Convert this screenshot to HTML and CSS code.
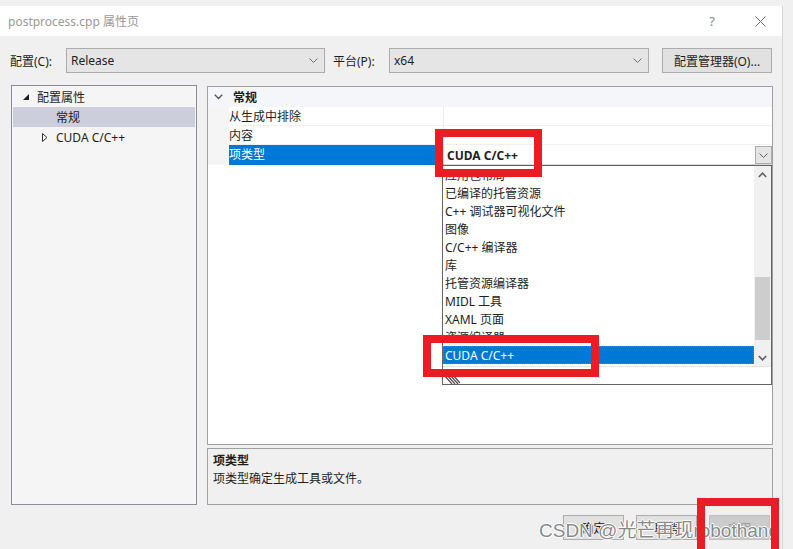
FILE: index.html
```html
<!DOCTYPE html>
<html lang="zh-CN">
<head>
    <meta charset="UTF-8">
    <title>postprocess.cpp 属性页</title>
    <link rel="stylesheet" href="styles.css">
</head>
<body>
    <div class="window">
        <div class="titlebar">
            <span class="title">postprocess.cpp 属性页</span>
            <span class="help">?</span>
            <svg class="close" width="11" height="11" viewBox="0 0 11 11"><path d="M0.5 0.5 L10.5 10.5 M10.5 0.5 L0.5 10.5" stroke="#6f6f6f" stroke-width="1" fill="none"/></svg>
        </div>

        <div class="config-row">
            <span class="cfg-label">配置(C):</span>
            <div class="select sel-config">
                <span>Release</span>
                <svg width="9" height="5" viewBox="0 0 9 5"><path d="M0.5 0.5 L4.5 4.5 L8.5 0.5" stroke="#707070" fill="none"/></svg>
            </div>
            <span class="cfg-label plat">平台(P):</span>
            <div class="select sel-platform">
                <span>x64</span>
                <svg width="9" height="5" viewBox="0 0 9 5"><path d="M0.5 0.5 L4.5 4.5 L8.5 0.5" stroke="#707070" fill="none"/></svg>
            </div>
            <button class="btn btn-manager">配置管理器(O)...</button>
        </div>

        <div class="main">
            <div class="tree">
                <div class="tree-row level-0">
                    <span class="twisty"><svg width="6" height="6" viewBox="0 0 6 6"><polygon points="6,0 6,6 0,6" fill="#1e1e1e"/></svg></span>
                    <span>配置属性</span>
                </div>
                <div class="tree-row level-1 selected">
                    <span class="twisty"></span>
                    <span>常规</span>
                </div>
                <div class="tree-row level-1">
                    <span class="twisty"><svg width="6" height="9" viewBox="0 0 6 9"><polygon points="0.5,0.5 5,4.5 0.5,8.5" fill="none" stroke="#333"/></svg></span>
                    <span>CUDA C/C++</span>
                </div>
            </div>

            <div class="right">
                <div class="grid">
                    <div class="cat-row">
                        <span class="cat-arrow"><svg width="9" height="6" viewBox="0 0 9 6"><path d="M0.8 0.8 L4.5 4.5 L8.2 0.8" stroke="#555" stroke-width="1.4" fill="none"/></svg></span>
                        <b>常规</b>
                    </div>
                    <div class="prop-row">
                        <div class="prop-margin"></div>
                        <div class="prop-name">从生成中排除</div>
                        <div class="prop-value"></div>
                    </div>
                    <div class="prop-row">
                        <div class="prop-margin"></div>
                        <div class="prop-name">内容</div>
                        <div class="prop-value"></div>
                    </div>
                    <div class="prop-row active">
                        <div class="prop-margin"></div>
                        <div class="prop-name">项类型</div>
                        <div class="prop-value combo">
                            <b>CUDA C/C++</b>
                            <span class="combo-btn"><svg width="9" height="5" viewBox="0 0 9 5"><path d="M0.5 0.5 L4.5 4.5 L8.5 0.5" stroke="#606060" fill="none"/></svg></span>
                        </div>
                    </div>
                </div>
                <div class="desc">
                    <div class="desc-title">项类型</div>
                    <div>项类型确定生成工具或文件。</div>
                </div>
            </div>
        </div>

        <div class="footer">
            <button class="btn btn-foot">确定</button>
            <button class="btn btn-foot">取消</button>
            <button class="btn btn-foot disabled">应用</button>
        </div>
    </div>

    <!-- open dropdown of 项类型 -->
    <div class="dropdown">
        <div class="dd-body">
            <div class="dd-list">
                <div class="dd-item">应用包布局</div>
                <div class="dd-item">已编译的托管资源</div>
                <div class="dd-item">C++ 调试器可视化文件</div>
                <div class="dd-item">图像</div>
                <div class="dd-item">C/C++ 编译器</div>
                <div class="dd-item">库</div>
                <div class="dd-item">托管资源编译器</div>
                <div class="dd-item">MIDL 工具</div>
                <div class="dd-item">XAML 页面</div>
                <div class="dd-item">资源编译器</div>
                <div class="dd-item selected">CUDA C/C++</div>
            </div>
            <div class="dd-scroll">
                <div class="sb-btn"><svg width="9" height="6" viewBox="0 0 9 6"><path d="M0.8 5 L4.5 1.2 L8.2 5" stroke="#606060" stroke-width="1.6" fill="none"/></svg></div>
                <div class="sb-track"><div class="sb-thumb"></div></div>
                <div class="sb-btn"><svg width="9" height="6" viewBox="0 0 9 6"><path d="M0.8 1 L4.5 4.8 L8.2 1" stroke="#606060" stroke-width="1.6" fill="none"/></svg></div>
            </div>
        </div>
        <div class="dd-grip">
            <svg width="17" height="9" viewBox="0 0 17 9"><path d="M1 0 L9 9 M4 0 L12 9 M7 0 L15 9 M10 0 L17 8" stroke="#4a4a4a" stroke-width="1.2" fill="none"/></svg>
        </div>
    </div>

    <div class="watermark">CSDN @光芒再现robothang</div>

    <div class="mark mark-combo"></div>
    <div class="mark mark-item"></div>
    <div class="mark mark-apply"></div>
</body>
</html>
```

FILE: styles.css
```css
body {
    margin: 0;
    width: 793px;
    height: 549px;
    overflow: hidden;
    position: relative;
    background: #f0f0f0;
    font-family: "Noto Sans", "Noto Sans CJK SC", sans-serif;
    font-size: 12px;
    color: #1e1e1e;
}

.window {
    margin-top: 6px;
    width: 783px;
    height: 543px;
    box-sizing: border-box;
    border-right: 1px solid #d6d6d6;
    background: #f0f0f0;
}

.titlebar {
    height: 30px;
    background: #fff;
    display: flex;
    align-items: center;
    padding: 0 16px 0 8px;
}

.title {
    flex: 1;
    color: #999;
}

.help {
    color: #8a8a8a;
    font-size: 13px;
    margin-right: 40px;
}

.config-row {
    display: flex;
    align-items: center;
    height: 25px;
    margin-top: 12px;
    padding-left: 10px;
}

.cfg-label {
    width: 56px;
}

.cfg-label.plat {
    margin-left: 8px;
}

.select {
    height: 25px;
    box-sizing: border-box;
    background: #e5e5e5;
    border: 1px solid #acacac;
    display: flex;
    align-items: center;
    justify-content: space-between;
    padding: 0 6px 0 4px;
}

.sel-config {
    width: 259px;
}

.sel-platform {
    width: 260px;
}

.btn {
    font: inherit;
    color: #1e1e1e;
    background: #e1e1e1;
    border: 1px solid #adadad;
    padding: 0;
    box-sizing: border-box;
}

.btn-manager {
    margin-left: 13px;
    width: 110px;
    height: 25px;
}

.main {
    display: flex;
    gap: 10px;
    height: 420px;
    margin-top: 12px;
    padding-left: 11px;
}

.tree {
    width: 186px;
    box-sizing: border-box;
    border: 1px solid #8b8d96;
    background: #f5f5f5;
    padding: 1px;
}

.tree-row {
    height: 20px;
    display: flex;
    align-items: center;
}

.tree-row.level-0 {
    padding-left: 10px;
}

.tree-row.level-1 {
    padding-left: 29px;
}

.tree-row.selected {
    background: #cccedb;
}

.twisty {
    width: 14px;
    display: flex;
    align-items: center;
}

.right {
    width: 566px;
    display: flex;
    flex-direction: column;
    gap: 3px;
}

.grid {
    height: 359px;
    margin-top: 1px;
    box-sizing: border-box;
    border: 1px solid #a0a0a0;
    background: #fff;
}

.cat-row {
    height: 20px;
    display: flex;
    align-items: center;
    background: #f4f6f9;
    padding-left: 6px;
}

.cat-arrow {
    width: 19px;
    display: flex;
    align-items: center;
}

.prop-row {
    display: grid;
    grid-template-columns: 21px 215px 1fr;
    height: 19px;
}

.prop-margin {
    background: #f5f5f5;
}

.prop-name {
    box-sizing: border-box;
    padding-top: 2px;
    line-height: 16px;
    border-bottom: 1px solid #f0f0f0;
    border-right: 1px solid #ececec;
}

.prop-value {
    border-bottom: 1px solid #f0f0f0;
}

.prop-row.active .prop-name {
    background: #0078d7;
    color: #fff;
    border-bottom-color: #0078d7;
}

.combo {
    display: flex;
    align-items: center;
    justify-content: space-between;
    padding-left: 3px;
    padding-top: 1px;
    border-bottom: 1px solid #d8d8d8;
}

.combo-btn {
    width: 17px;
    height: 18px;
    box-sizing: border-box;
    background: #e5e5e5;
    border: 1px solid #acacac;
    display: flex;
    align-items: center;
    justify-content: center;
}

.desc {
    height: 57px;
    box-sizing: border-box;
    border: 1px solid #a0a0a0;
    background: #f0f0f0;
    padding: 3px 5px;
    line-height: 18px;
}

.desc-title {
    font-weight: bold;
}

.footer {
    display: flex;
    justify-content: flex-end;
    gap: 12px;
    margin-top: 10px;
    padding-right: 12px;
}

.btn-foot {
    width: 61px;
    height: 25px;
}

.btn-foot.disabled {
    background: #cccccc;
    border-color: #bfbfbf;
    color: #a0a0a0;
}

.dropdown {
    position: absolute;
    left: 442px;
    top: 165px;
    width: 330px;
    height: 220px;
    box-sizing: border-box;
    border: 1px solid #646464;
    background: #fff;
}

.dd-body {
    display: flex;
    height: 200px;
}

.dd-list {
    flex: 1;
    overflow: hidden;
    position: relative;
}

.dd-list::before {
    content: "";
    position: absolute;
    left: 0;
    right: 0;
    top: 0;
    height: 5px;
    background: #fff;
}

.dd-item {
    height: 18px;
    box-sizing: border-box;
    padding: 2px 0 0 2px;
    line-height: 16px;
    white-space: nowrap;
}

.dd-item.selected {
    background: #0078d7;
    color: #fff;
    outline: 1px dotted #b07020;
    outline-offset: -1px;
}

.dd-scroll {
    width: 17px;
    background: #f0f0f0;
    display: flex;
    flex-direction: column;
}

.sb-btn {
    height: 17px;
    display: flex;
    align-items: center;
    justify-content: center;
}

.sb-track {
    flex: 1;
}

.sb-thumb {
    margin: 94px 1px 0;
    height: 63px;
    background: #cdcdcd;
}

.dd-grip {
    height: 18px;
    box-sizing: border-box;
    border-top: 1px solid #e3e3e3;
    display: flex;
    align-items: flex-end;
}

.watermark {
    position: absolute;
    left: 539px;
    top: 515px;
    font-family: "Liberation Sans", "Noto Sans CJK SC", sans-serif;
    font-size: 19px;
    color: rgba(105, 105, 105, 0.8);
    text-shadow: 1px 0 0 #fff, -1px 0 0 #fff, 0 1px 0 #fff, 0 -1px 0 #fff;
    white-space: nowrap;
}

.mark {
    position: absolute;
    border: 8px solid #ec1c24;
    box-sizing: border-box;
}

.mark-combo {
    left: 435px;
    top: 129px;
    width: 107px;
    height: 48px;
}

.mark-item {
    left: 423px;
    top: 335px;
    width: 176px;
    height: 42px;
}

.mark-apply {
    left: 697px;
    top: 498px;
    width: 82px;
    height: 60px;
}
```
